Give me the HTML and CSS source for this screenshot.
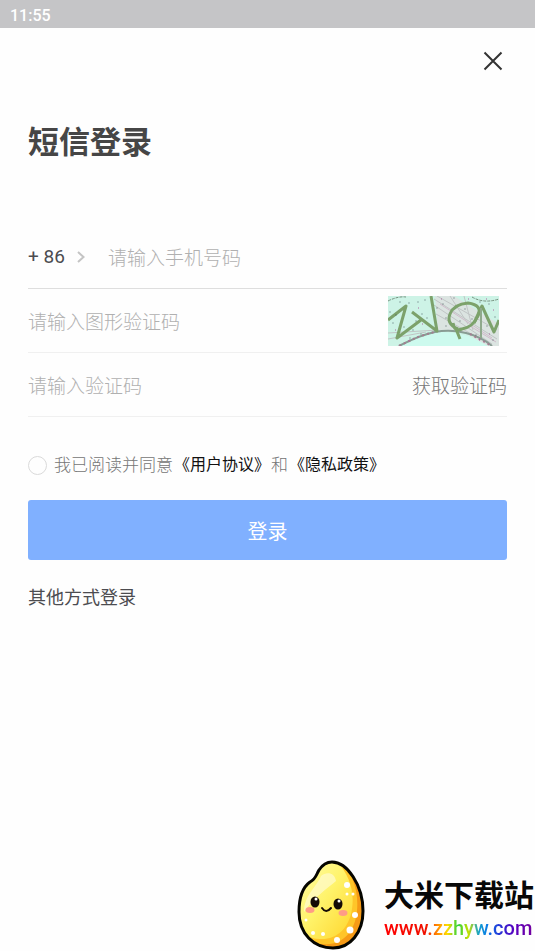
FILE: index.html
```html
<!DOCTYPE html>
<html lang="zh-CN">
<head>
<meta charset="utf-8">
<meta name="viewport" content="width=device-width, initial-scale=1">
<title>短信登录</title>
<link rel="stylesheet" href="styles.css">
</head>
<body>
<header class="status-bar"><time>11:55</time></header>
<div class="toolbar">
  <button class="close" type="button" aria-label="关闭">
    <svg width="20" height="20" viewBox="0 0 20 20" aria-hidden="true"><path d="M1.5 1.5 18.5 18.5M18.5 1.5 1.5 18.5"/></svg>
  </button>
</div>
<main class="login">
  <h1 class="title">短信登录</h1>
  <form>
    <div class="field field-phone">
      <button class="country" type="button">+ 86
        <svg width="8" height="12" viewBox="0 0 8 12" aria-hidden="true"><path d="M1 1 6.500 6 1 11"/></svg>
      </button>
      <input type="tel" aria-label="手机号码" placeholder="请输入手机号码">
    </div>
    <div class="field field-captcha">
      <input type="text" aria-label="图形验证码" placeholder="请输入图形验证码">
      <svg class="captcha" width="111" height="50" viewBox="0 0 111 50" role="img" aria-label="图形验证码图片">
        <rect width="111" height="50" fill="#cdf3e6"/>
        <path d="M47 0H66L111 28V50H98L78 37 50 34Z" fill="#dbe4e1"/>
        <path d="M12 50Q55 22 100 50Z" fill="#cdfaee"/>
        <g fill="none" stroke="#c0c5c5" stroke-width="1">
          <path d="M46 3 109 43M46 9 104 48M49 0 109 34M48 18 94 44M0 37 50 34M0 43 38 36M62 0 80 28M76 0 85 34"/>
          <path d="M52 8 104 42M82 30 108 46" stroke="#d0bccb"/>
        </g>
        <path d="M11 50Q32 39 47 36T78 37T104 50" fill="none" stroke="#889c93" stroke-width="2"/>
        <path d="M11 50Q32 39 47 36M82 38 104 50" fill="none" stroke="#a47d91" stroke-width="2" stroke-dasharray="2 3"/>
        <path d="M0 5Q10 0 18 1M84 1Q96 8 111 3" fill="none" stroke="#76917f" stroke-dasharray="3 1"/>
        <g fill="none" stroke="#7ca26b" stroke-width="3" stroke-linejoin="round">
          <path d="M0 24 18 10 9 42 33 24M24 16 49 35 43 0"/>
          <path d="M70 33Q58 28 62 18T80 7Q95 9 90 20T74 33Q66 36 65 27M68 33 72 43"/>
          <path d="M86 27 94 10 106 36 111 24"/>
        </g>
        <path d="M93 12V42" stroke="#8fa98c" stroke-width="2"/>
        <path class="captcha-dots" d="M12 6h0M21 7h0M30 6h0M37 4h0M34 18h0M28 25h0M39 22h0M5 27h0M25 34h0M33 38h0M58 22h0M58 30h0M55 8h0M66 2h0M77 13h0M84 23h0M92 6h0M101 8h0M107 21h0M99 30h0M88 39h0M16 31h0M49 12h0M72 25h0M105 44h0M22 42h0M2 16h0M8 19h0"/>
        <path d="M30 12h1M7 34h1M34 28h1M53 3h1M98 3h1M91 44h1M105 14h1M20 45h1M80 3h1M101 38h1" stroke="#ad66a0" stroke-width="1"/>
      </svg>
    </div>
    <div class="field">
      <input type="text" aria-label="验证码" placeholder="请输入验证码">
      <button class="send-code" type="button">获取验证码</button>
    </div>
    <div class="agreement">
      <input type="checkbox" id="agree">
      <label for="agree">我已阅读并同意</label>
      <a href="#">《用户协议》</a>
      <span>和</span>
      <a href="#">《隐私政策》</a>
    </div>
    <button class="submit" type="submit">登录</button>
  </form>
  <a class="other" href="#">其他方式登录</a>
</main>
<footer class="brand">
  <svg class="mascot" width="70" height="92" viewBox="0 0 70 92" aria-hidden="true">
    <defs>
      <linearGradient id="grain" x1="0" y1="0" x2="1" y2="1">
        <stop offset="0" stop-color="#ffffb0"/><stop offset=".5" stop-color="#fff36a"/><stop offset="1" stop-color="#ffd52c"/>
      </linearGradient>
      <clipPath id="body"><path d="M36 3C51 3 67 26 67 52C67 74 54 89 37 89C18 89 3 75 3 53C3 38 7 28 14 23C20 20 20 16 23 11C27 5 31 3 36 3Z"/></clipPath>
    </defs>
    <g clip-path="url(#body)">
      <path d="M0 0H70V92H0Z" fill="#f69a16"/>
      <path d="M40 0C56 11 63 31 61 52C59 74 45 87 27 85L0 85V0Z" fill="#ffc529"/>
      <path d="M38 0C52 12 59 31 56 50C53 70 40 81 24 80C12 80 5 73 0 64V0Z" fill="url(#grain)"/>
      <path d="M8 53C8 36 20 29 25 17C31 12 39 14 40 22C31 30 18 38 8 53Z" fill="#fffbd0" opacity=".7"/>
    </g>
    <path d="M36 3C51 3 67 26 67 52C67 74 54 89 37 89C18 89 3 75 3 53C3 38 7 28 14 23C20 20 20 16 23 11C27 5 31 3 36 3Z" fill="none" stroke="#050500" stroke-width="3"/>
    <g fill="#fff"><circle cx="51" cy="26" r="3"/><circle cx="51" cy="35" r="1.500"/><circle cx="57" cy="35" r="1.500"/><circle cx="59" cy="56" r="3"/><circle cx="54" cy="71" r="3.500"/><circle cx="41" cy="81" r="3"/><circle cx="17" cy="74" r="2"/><circle cx="27" cy="75" r="2"/><circle cx="10" cy="61" r="1.500"/></g>
    <ellipse cx="14" cy="51" rx="4.500" ry="3" fill="#ff9c86"/><ellipse cx="47" cy="54" rx="4.500" ry="3" fill="#ff9c86"/>
    <ellipse cx="19" cy="43" rx="4.500" ry="5.500" fill="#140a05"/><ellipse cx="42" cy="45" rx="4.500" ry="5.500" fill="#140a05"/>
    <circle cx="20" cy="40" r="1.500" fill="#fff"/><circle cx="43" cy="42" r="1.500" fill="#fff"/>
    <path d="M26 49Q30 55 35 49" fill="none" stroke="#140a05" stroke-width="2" stroke-linecap="round"/>
  </svg>
  <div class="brand-text">
    <strong class="brand-name">大米下载站</strong>
    <span class="brand-url">www.zzhyw.com</span>
  </div>
</footer>
</body>
</html>
```
FILE: styles.css
```css
* { box-sizing: border-box; }

body {
  margin: 0;
  min-height: 100vh;
  display: flex;
  flex-direction: column;
  overflow-x: hidden;
  background: #fefefe;
  color: #4c4c50;
  font-family: Roboto, "Noto Sans CJK SC", sans-serif;
  font-size: 19px;
}

button, input { font: inherit; color: inherit; }
button { padding: 0; border: 0; background: none; cursor: pointer; }
a { text-decoration: none; }

.status-bar {
  height: 28px;
  padding: 2px 10px 0;
  background: #c5c5c7;
  color: #fff;
  font-size: 16px;
  font-weight: 500;
  line-height: 28px;
}

.toolbar { display: flex; justify-content: flex-end; padding: 23px 32px 0; }
.close { width: 20px; height: 20px; }
.close svg { display: block; fill: none; stroke: #333; stroke-width: 2; }

.login { padding: 50px 28px 0; }
.title { margin: 0 0 60px; font-size: 31px; line-height: 44px; font-weight: 700; color: #464646; }

.field {
  display: flex;
  align-items: center;
  height: 64px;
  border-bottom: 1px solid #f0f0f0;
}
.field-phone { border-color: #dedede; }
.field-captcha { padding-right: 8px; }
.field input {
  flex: 1;
  min-width: 0;
  padding: 3px 0 0;
  border: 0;
  outline: 0;
  background: none;
}
.field input::placeholder { color: #b0b0b0; font-weight: 300; opacity: 1; }

.country { display: flex; align-items: center; gap: 12px; width: 80px; white-space: nowrap; }
.country svg { fill: none; stroke: #c4c4c4; stroke-width: 2; }
.captcha { display: block; flex: none; }
.captcha-dots { stroke: #33434c; stroke-width: 1; stroke-linecap: round; }
.send-code { color: #757575; font-weight: 300; }

.agreement {
  display: flex;
  align-items: center;
  gap: 1px;
  margin-top: 36px;
  font-size: 17px;
  font-weight: 300;
  line-height: 24px;
  color: #757575;
  white-space: nowrap;
}
.agreement input {
  appearance: none;
  width: 19px;
  height: 19px;
  margin: 0 6px 0 0;
  border: 1px solid #dadada;
  border-radius: 50%;
}
.agreement input:checked { background: #80b0ff; }
.agreement a { font-size: 16px; font-weight: 400; color: #111; }

.submit {
  display: block;
  width: 100%;
  height: 60px;
  margin: 23px 0 25px;
  border-radius: 3px;
  background: #80b0ff;
  color: #fff;
  font-size: 20px;
}
.other { color: #4c4c50; font-size: 18px; line-height: 26px; }

.brand {
  display: flex;
  justify-content: flex-end;
  gap: 18px;
  margin-top: auto;
}
.mascot { flex: none; }
.brand-text { display: flex; flex-direction: column; align-items: flex-start; padding: 17px 1px 0 0; }
.brand-name { font-size: 30px; line-height: 40px; font-weight: 700; color: #080808; }
.brand-url {
  font-size: 20px;
  line-height: 24px;
  font-weight: 500;
  color: transparent;
  background: linear-gradient(90deg, #f00 0, #f01000 28%, #ff8a00 36%, #ffdc00 43%, #29d23c 50%, #c8df00 57%, #16a2ca 64%, #0878e8 70%, #2433d6 78%, #5900c0 88%, #7200a0 100%);
  background-clip: text;
  -webkit-background-clip: text;
}
```
